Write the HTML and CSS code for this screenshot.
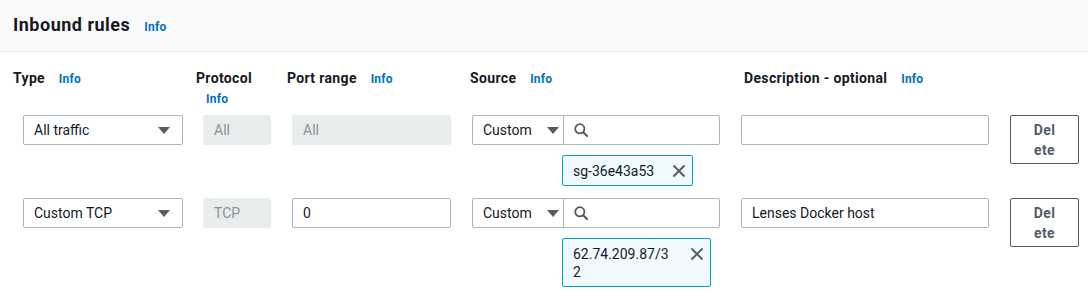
FILE: index.html
```html
<!DOCTYPE html>
<html lang="en">

<head>
  <meta charset="UTF-8">
  <title>Inbound rules</title>
  <link rel="stylesheet" href="styles.css">
</head>

<body>
  <!-- Header -->
  <div class="panel-header">
    <h2>Inbound rules</h2>
    <a class="info info-title" href="#">Info</a>
  </div>

  <div class="rules">
    <!-- Column labels -->
    <div class="row labels">
      <div class="label label-type">Type <a class="info" href="#">Info</a></div>
      <div class="label label-protocol">Protocol <a class="info" href="#">Info</a></div>
      <div class="label label-port">Port range <a class="info" href="#">Info</a></div>
      <div class="label label-source">Source <a class="info" href="#">Info</a></div>
      <div class="label label-desc">Description - optional <a class="info" href="#">Info</a></div>
      <div></div>
    </div>

    <!-- Rule 1 -->
    <div class="row rule">
      <div class="field select type-select">
        <span>All traffic</span>
        <span class="caret"></span>
      </div>
      <div class="field disabled protocol">All</div>
      <div class="field disabled port">All</div>
      <div class="source">
        <div class="source-group">
          <div class="select source-select">
            <span>Custom</span>
            <span class="caret"></span>
          </div>
          <div class="search">
            <svg width="14" height="14" viewBox="0 0 14 14">
              <circle cx="5.8" cy="5.8" r="4.6" fill="none" stroke="#545b64" stroke-width="1.8"/>
              <line x1="9.2" y1="9.2" x2="13" y2="13" stroke="#545b64" stroke-width="2" stroke-linecap="round"/>
            </svg>
          </div>
        </div>
        <div class="token">
          <span class="token-text">sg-36e43a53</span>
          <span class="dismiss">
            <svg width="14" height="14" viewBox="0 0 14 14">
              <path d="M1.5 1.5 L12.5 12.5 M12.5 1.5 L1.5 12.5" stroke="#545b64" stroke-width="1.9" fill="none"/>
            </svg>
          </span>
        </div>
      </div>
      <div class="field desc"></div>
      <button class="delete">Delete</button>
    </div>

    <!-- Rule 2 -->
    <div class="row rule">
      <div class="field select type-select">
        <span>Custom TCP</span>
        <span class="caret"></span>
      </div>
      <div class="field disabled protocol">TCP</div>
      <div class="field port">0</div>
      <div class="source">
        <div class="source-group">
          <div class="select source-select">
            <span>Custom</span>
            <span class="caret"></span>
          </div>
          <div class="search">
            <svg width="14" height="14" viewBox="0 0 14 14">
              <circle cx="5.8" cy="5.8" r="4.6" fill="none" stroke="#545b64" stroke-width="1.8"/>
              <line x1="9.2" y1="9.2" x2="13" y2="13" stroke="#545b64" stroke-width="2" stroke-linecap="round"/>
            </svg>
          </div>
        </div>
        <div class="token">
          <span class="token-text">62.74.209.87/32</span>
          <span class="dismiss">
            <svg width="14" height="14" viewBox="0 0 14 14">
              <path d="M1.5 1.5 L12.5 12.5 M12.5 1.5 L1.5 12.5" stroke="#545b64" stroke-width="1.9" fill="none"/>
            </svg>
          </span>
        </div>
      </div>
      <div class="field desc">Lenses Docker host</div>
      <button class="delete">Delete</button>
    </div>
  </div>
</body>

</html>
```

FILE: styles.css
```css
* {
  margin: 0;
  padding: 0;
  box-sizing: border-box;
}

body {
  font-family: Roboto, "Liberation Sans", sans-serif;
  font-size: 14px;
  color: #16191f;
  background: white;
}

/* Header */
.panel-header {
  display: flex;
  align-items: baseline;
  height: 52px;
  padding: 13px 13px 0;
  background: #fafafa;
  border-bottom: 1px solid #eaeded;
}

.panel-header h2 {
  font-size: 18px;
  line-height: 24px;
  font-weight: 700;
  letter-spacing: 0.5px;
}

.info {
  margin-left: 10px;
  font-size: 12px;
  font-weight: 700;
  letter-spacing: 0.2px;
  color: #0073bb;
  text-decoration: none;
}

.info-title {
  margin-left: 14px;
}

/* Rules table */
.rules {
  padding: 16px 0 0 23px;
}

.row {
  display: grid;
  grid-template-columns: 180px 89px 180px 269px 269px 69px;
  align-items: start;
}

.label {
  font-weight: 700;
  line-height: 21px;
  letter-spacing: 0.35px;
}

.label-type { margin-left: -10px; }
.label-protocol { margin-left: -7px; width: 72px; }
.label-protocol .info { display: block; margin-left: 10px; }
.label-port { margin-left: -5px; }
.label-source { margin-left: -2px; }
.label-desc { margin-left: 3px; }

.labels {
  margin-bottom: 5px;
}

.rule {
  margin-bottom: 12px;
}

/* Inputs */
.field {
  height: 30px;
  line-height: 28px;
  padding: 0 10px;
  border: 1px solid #aab7b8;
  border-radius: 2px;
  background: white;
}

.disabled {
  background: #eaeded;
  border-color: #eaeded;
  color: #879596;
}

.type-select { width: 160px; }
.protocol { width: 68px; }
.port { width: 159px; }
.desc { width: 248px; }

.select {
  display: flex;
  justify-content: space-between;
  align-items: center;
}

.type-select {
  padding-right: 12px;
}

.caret {
  width: 0;
  height: 0;
  border-left: 6px solid transparent;
  border-right: 6px solid transparent;
  border-top: 7px solid #545b64;
}

/* Source */
.source {
  display: flex;
  flex-direction: column;
  align-items: flex-start;
  width: 248px;
}

.source-group {
  display: flex;
  width: 100%;
  height: 30px;
  border: 1px solid #aab7b8;
  border-radius: 2px;
}

.source-select {
  width: 91px;
  padding: 0 4px 0 10px;
  border-right: 1px solid #aab7b8;
}

.search {
  flex: 1;
  display: flex;
  align-items: center;
  padding-left: 10px;
}

.token {
  display: flex;
  align-items: flex-start;
  max-width: 149px;
  margin: 10px 0 0 90px;
  padding: 6px 3px 5px 10px;
  background: #f1faff;
  border: 1px solid #00a1c9;
  border-radius: 2px;
  line-height: 18px;
}

.token-text {
  flex: 1;
  word-break: break-all;
  padding-right: 15px;
}

.dismiss {
  display: flex;
  width: 20px;
  height: 18px;
  align-items: center;
  justify-content: center;
}

/* Delete button */
.delete {
  width: 69px;
  padding: 4px 20px 3px;
  font-family: inherit;
  font-size: 14px;
  font-weight: 700;
  line-height: 20px;
  letter-spacing: 0.4px;
  color: #545b64;
  background: white;
  border: 1px solid #545b64;
  border-radius: 2px;
  word-break: break-all;
  cursor: pointer;
}
```
